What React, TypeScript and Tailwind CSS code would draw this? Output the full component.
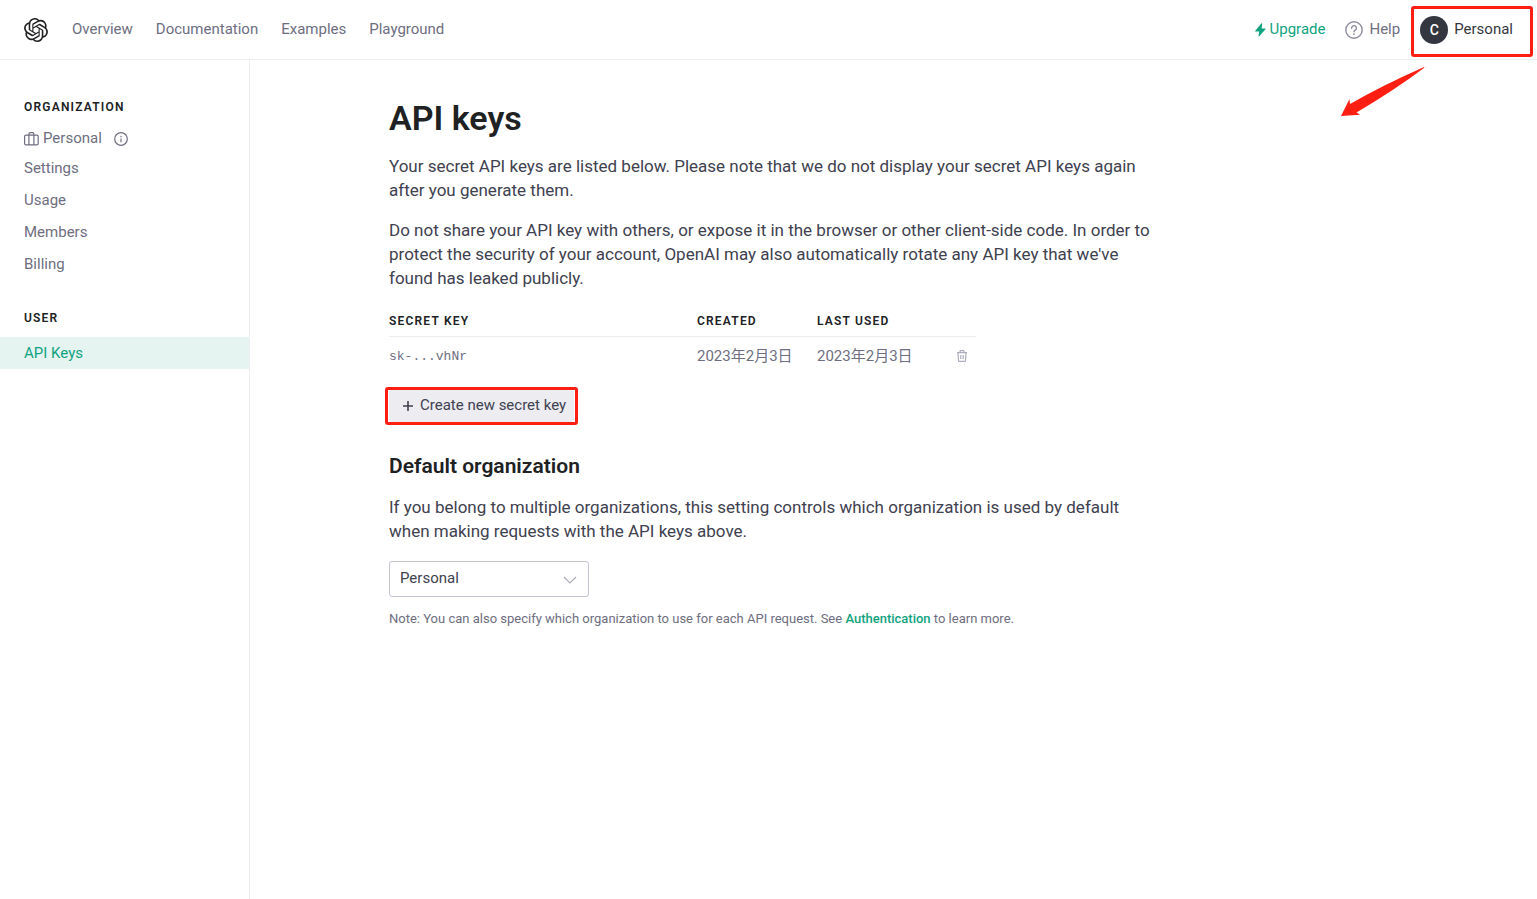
import { useState } from 'react'
import { SiOpenai } from 'react-icons/si'

const navLinks = ['Overview', 'Documentation', 'Examples', 'Playground']
const orgLinks = ['Settings', 'Usage', 'Members', 'Billing']
const keys = [{ key: 'sk-...vhNr', created: '2023年2月3日', lastUsed: '2023年2月3日' }]

function Highlight({ className }: { className: string }) {
    return <span aria-hidden="true" className={`absolute border-3 border-[#ff1f12] rounded-[3px] pointer-events-none ${className}`} />
}

function BoltIcon() {
    return (
        <svg width="11" height="14" viewBox="0 0 11 14" fill="currentColor" aria-hidden="true">
            <path d="M6.3.6.3 7.8a.4.4 0 0 0 .3.7H4.2L3.5 13.2a.3.3 0 0 0 .5.2L10.500 6.300a.4.4 0 0 0-.3-.7H6.700L7.200.900a.4.4 0 0 0-.9-.3Z" />
        </svg>
    )
}

function HelpIcon() {
    return (
        <svg width="18" height="18" viewBox="0 0 18 18" fill="none" stroke="currentColor" strokeLinecap="round" aria-hidden="true">
            <circle cx="9" cy="9" r="8.2" strokeWidth="1.4" />
            <path d="M6.600 7.200a2.400 2.400 0 1 1 3.700 1.900c-.9.5-1.300.9-1.300 1.700" strokeWidth="1.4" />
            <circle cx="9" cy="13.2" r=".9" fill="currentColor" stroke="none" />
        </svg>
    )
}

function SuitcaseIcon() {
    return (
        <svg width="15" height="14" viewBox="0 0 15 14" fill="none" stroke="currentColor" strokeWidth="1.2" aria-hidden="true">
            <rect x=".6" y="3.1" width="13.6" height="9.8" rx="1.4" />
            <path d="M4.9 12.9V2.2c0-.9.6-1.5 1.4-1.5h2.2c.8 0 1.4.6 1.4 1.5v10.7" />
        </svg>
    )
}

function InfoIcon() {
    return (
        <svg width="14" height="14" viewBox="0 0 14 14" fill="none" stroke="currentColor" strokeWidth="1.2" aria-hidden="true">
            <circle cx="7" cy="7" r="6.3" />
            <path d="M7 6.4v3.8M7 4v1.2" />
        </svg>
    )
}

function TrashIcon() {
    return (
        <svg width="12" height="12" viewBox="0 0 12 12" fill="none" stroke="currentColor" strokeWidth="1.2" aria-hidden="true">
            <path d="M1 2.7h10M4 2.5V1.4c0-.5.3-.8.8-.8h2.4c.5 0 .8.3.8.8v1.1M2 2.8l.5 7.6c0 .6.5 1 1 1h5c.6 0 1-.4 1-1l.5-7.6M4.8 5v4M7.2 5v4" />
        </svg>
    )
}

function Header() {
    return (
        <header className="relative flex items-center h-15 px-6 border-b border-[#ececf1] text-[#6e6e80]">
            <a href="#home" aria-label="OpenAI" className="text-[#202123]">
                <SiOpenai size={24} />
            </a>
            <nav className="flex gap-[23px] ml-6 text-[15px]">
                {navLinks.map((link) => (
                    <a key={link} href={`#${link.toLowerCase()}`}>{link}</a>
                ))}
            </nav>
            <div className="flex items-center ml-auto text-[15px]">
                <a href="#upgrade" className="flex items-center gap-1 text-[#10a37f]">
                    <BoltIcon />
                    Upgrade
                </a>
                <button type="button" className="flex items-center gap-1.5 ml-5">
                    <span className="text-[#8e8ea0]"><HelpIcon /></span>
                    Help
                </button>
                <button type="button" className="relative flex items-center gap-1.5 ml-5 text-[#353740]">
                    <span className="flex items-center justify-center size-7 rounded-full bg-[#353740] text-white text-sm font-medium">C</span>
                    Personal
                    <Highlight className="-left-[9px] -right-5 -top-[10px] -bottom-[13px]" />
                </button>
            </div>
            <svg className="absolute top-16 right-[112px]" width="86" height="54" viewBox="0 0 86 54" fill="#ff1f12" aria-hidden="true">
                <path d="M84.500 3.200Q86.200 2.600 84.600 4.200Q57 25 17.500 48.500L21.200 50.700L2 52L10.500 35L11 40Q42 22 84.500 3.200Z" />
            </svg>
        </header>
    )
}

function Sidebar() {
    return (
        <aside className="w-[250px] shrink-0 pt-[37px] border-r border-[#ececf1] text-[#6e6e80]">
            <h2 className="px-6 text-xs leading-5 font-semibold tracking-widest text-[#202123]">ORGANIZATION</h2>
            <div className="flex items-center px-6 mt-2 h-[27px] text-[15px]">
                <SuitcaseIcon />
                <span className="ml-1">Personal</span>
                <span className="ml-3"><InfoIcon /></span>
            </div>
            <ul className="text-[15px] leading-8">
                {orgLinks.map((link) => (
                    <li key={link}>
                        <a href={`#${link.toLowerCase()}`} className="block px-6">{link}</a>
                    </li>
                ))}
            </ul>
            <h2 className="px-6 mt-7 text-xs leading-5 font-semibold tracking-widest text-[#202123]">USER</h2>
            <a href="#api-keys" className="block px-6 mt-[9px] text-[15px] leading-8 bg-[#e5f3f1] text-[#10a37f]">API Keys</a>
        </aside>
    )
}

export default function App() {
    const [org, setOrg] = useState('Personal')

    return (
        <div className="flex flex-col min-h-screen bg-white font-['Roboto','Noto_Sans_CJK_SC',sans-serif]">
            <Header />
            <div className="flex flex-1">
                <Sidebar />
                <main className="flex-1 pt-9">
                    <div className="max-w-[1009px] mx-auto text-[#40414f]">
                        <h1 className="text-[34px] leading-11 font-semibold text-[#202123]">API keys</h1>
                        <p className="max-w-[768px] mt-3.5 text-[17px] leading-6">
                            Your secret API keys are listed below. Please note that we do not display your secret API keys again after you generate them.
                        </p>
                        <p className="max-w-[768px] mt-4 text-[17px] leading-6">
                            Do not share your API key with others, or expose it in the browser or other client-side code. In order to protect the security of your account, OpenAI may also automatically rotate any API key that we've found has leaked publicly.
                        </p>

                        <table className="w-[587px] mt-[21px] table-fixed text-left">
                            <thead>
                                <tr className="border-b border-[#ececf1] text-xs leading-5 tracking-widest text-[#202123]">
                                    <th className="w-[308px] pb-[5px] font-semibold">SECRET KEY</th>
                                    <th className="w-[120px] pb-[5px] font-semibold">CREATED</th>
                                    <th className="w-[120px] pb-[5px] font-semibold">LAST USED</th>
                                    <th aria-label="Actions" />
                                </tr>
                            </thead>
                            <tbody>
                                {keys.map((row) => (
                                    <tr key={row.key} className="h-[38px] text-[15px] text-[#6e6e80]">
                                        <td className="pt-0.5 font-['Liberation_Mono',monospace] text-[13px]">{row.key}</td>
                                        <td>{row.created}</td>
                                        <td>{row.lastUsed}</td>
                                        <td>
                                            <button type="button" aria-label="Delete key" className="flex ml-[19px] text-[#acacbe]"><TrashIcon /></button>
                                        </td>
                                    </tr>
                                ))}
                            </tbody>
                        </table>

                        <button type="button" className="relative flex items-center h-8 pl-3.5 pr-2 mt-[15px] rounded-[3px] bg-[#ececf1] text-[15px]">
                            <svg width="10" height="10" viewBox="0 0 10 10" stroke="currentColor" strokeWidth="1.6" aria-hidden="true">
                                <path d="M5 0v10M0 5h10" />
                            </svg>
                            <span className="ml-[7px]">Create new secret key</span>
                            <Highlight className="-inset-x-1 -inset-y-[3px]" />
                        </button>

                        <h2 className="mt-7 text-[21px] leading-8 font-semibold text-[#202123]">Default organization</h2>
                        <p className="max-w-[768px] mt-[13px] text-[17px] leading-6">
                            If you belong to multiple organizations, this setting controls which organization is used by default when making requests with the API keys above.
                        </p>
                        <div className="relative w-[200px] mt-[18px]">
                            <select
                                aria-label="Default organization"
                                value={org}
                                onChange={(e) => setOrg(e.target.value)}
                                className="block w-full h-9 pl-2.5 pr-8 appearance-none border border-[#c5c5d2] rounded-[3px] bg-white text-[15px]"
                            >
                                <option>Personal</option>
                            </select>
                            <svg className="absolute right-3 top-[15px] text-[#acacbe] pointer-events-none" width="14" height="8" viewBox="0 0 14 8" fill="none" stroke="currentColor" strokeWidth="1.2" aria-hidden="true">
                                <path d="m1 1 6 6 6-6" />
                            </svg>
                        </div>
                        <p className="mt-3 text-[13px] leading-5 text-[#6e6e80]">
                            Note: You can also specify which organization to use for each API request. See <a href="#authentication" className="font-medium text-[#10a37f]">Authentication</a> to learn more.
                        </p>
                    </div>
                </main>
            </div>
        </div>
    )
}
